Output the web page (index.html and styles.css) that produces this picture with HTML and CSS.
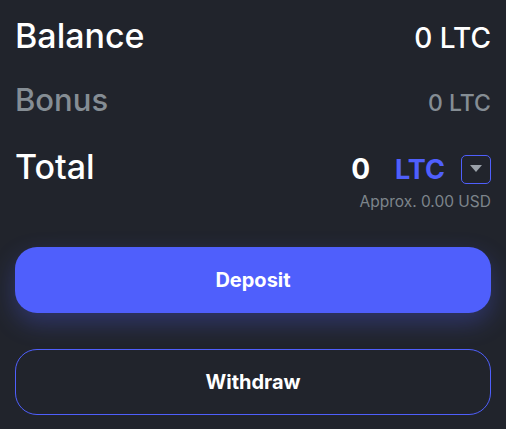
FILE: index.html
```html
<html lang="en">

<head>
    <meta charset="UTF-8">
    <meta name="viewport" content="width=device-width, initial-scale=1.0">
    <title>Wallet</title>
    <link rel="stylesheet" href="styles.css">
</head>

<body>
    <div class="wallet">
        <div class="row balance">
            <span class="label">Balance</span>
            <span class="amount">0 LTC</span>
        </div>

        <div class="row bonus">
            <span class="label">Bonus</span>
            <span class="amount">0 LTC</span>
        </div>

        <div class="row total">
            <span class="label">Total</span>
            <div class="total-value">
                <span class="total-num">0</span>
                <span class="total-cur">LTC</span>
                <button class="cur-select" aria-label="Select currency">
                    <svg width="12" height="8" viewBox="0 0 12 8"><path d="M0 0 L12 0 L6 7 Z" fill="#9aa1a9"/></svg>
                </button>
            </div>
        </div>
        <div class="approx">Approx. 0.00 USD</div>

        <button class="btn btn-deposit">Deposit</button>
        <button class="btn btn-withdraw">Withdraw</button>
    </div>
</body>

</html>
```

FILE: styles.css
```css
body {
    margin: 0;
    background-color: #21242c;
    color: #fff;
    font-family: "Inter", "Noto Sans", sans-serif;
}

.wallet {
    padding: 16px 15px 0 15px;
}

.row {
    display: flex;
    justify-content: space-between;
    align-items: baseline;
}

.label {
    font-size: 34px;
    font-weight: 500;
    line-height: 40px;
}

.amount {
    font-size: 28px;
    font-weight: 500;
    line-height: 40px;
}

.bonus {
    margin-top: 22px;
    color: #858d94;
}

.bonus .label {
    font-size: 31px;
}

.bonus .amount {
    font-size: 23px;
}

.total {
    margin-top: 24px;
}

.total-value {
    display: flex;
    align-items: center;
}

.total-num {
    font-size: 28px;
    font-weight: 700;
    margin-right: 25px;
}

.total-cur {
    font-size: 27px;
    font-weight: 700;
    color: #4f5ffc;
    margin-right: 16px;
}

.cur-select {
    width: 30px;
    height: 29px;
    border: 1px solid #4f5ffc;
    border-radius: 5px;
    background: transparent;
    display: flex;
    align-items: center;
    justify-content: center;
    padding: 0;
}

.approx {
    text-align: right;
    color: #7d848b;
    font-size: 15.5px;
    margin-top: 5px;
}

.btn {
    display: block;
    width: 100%;
    height: 66px;
    border-radius: 22px;
    font-family: inherit;
    font-size: 20px;
    font-weight: 700;
    color: #fff;
}

.btn-deposit {
    margin-top: 36px;
    background-color: #4f5ffc;
    border: none;
    box-shadow: 0 10px 24px rgba(79, 95, 252, 0.3);
}

.btn-withdraw {
    margin-top: 36px;
    background-color: transparent;
    border: 1px solid #4f5ffc;
}
```
